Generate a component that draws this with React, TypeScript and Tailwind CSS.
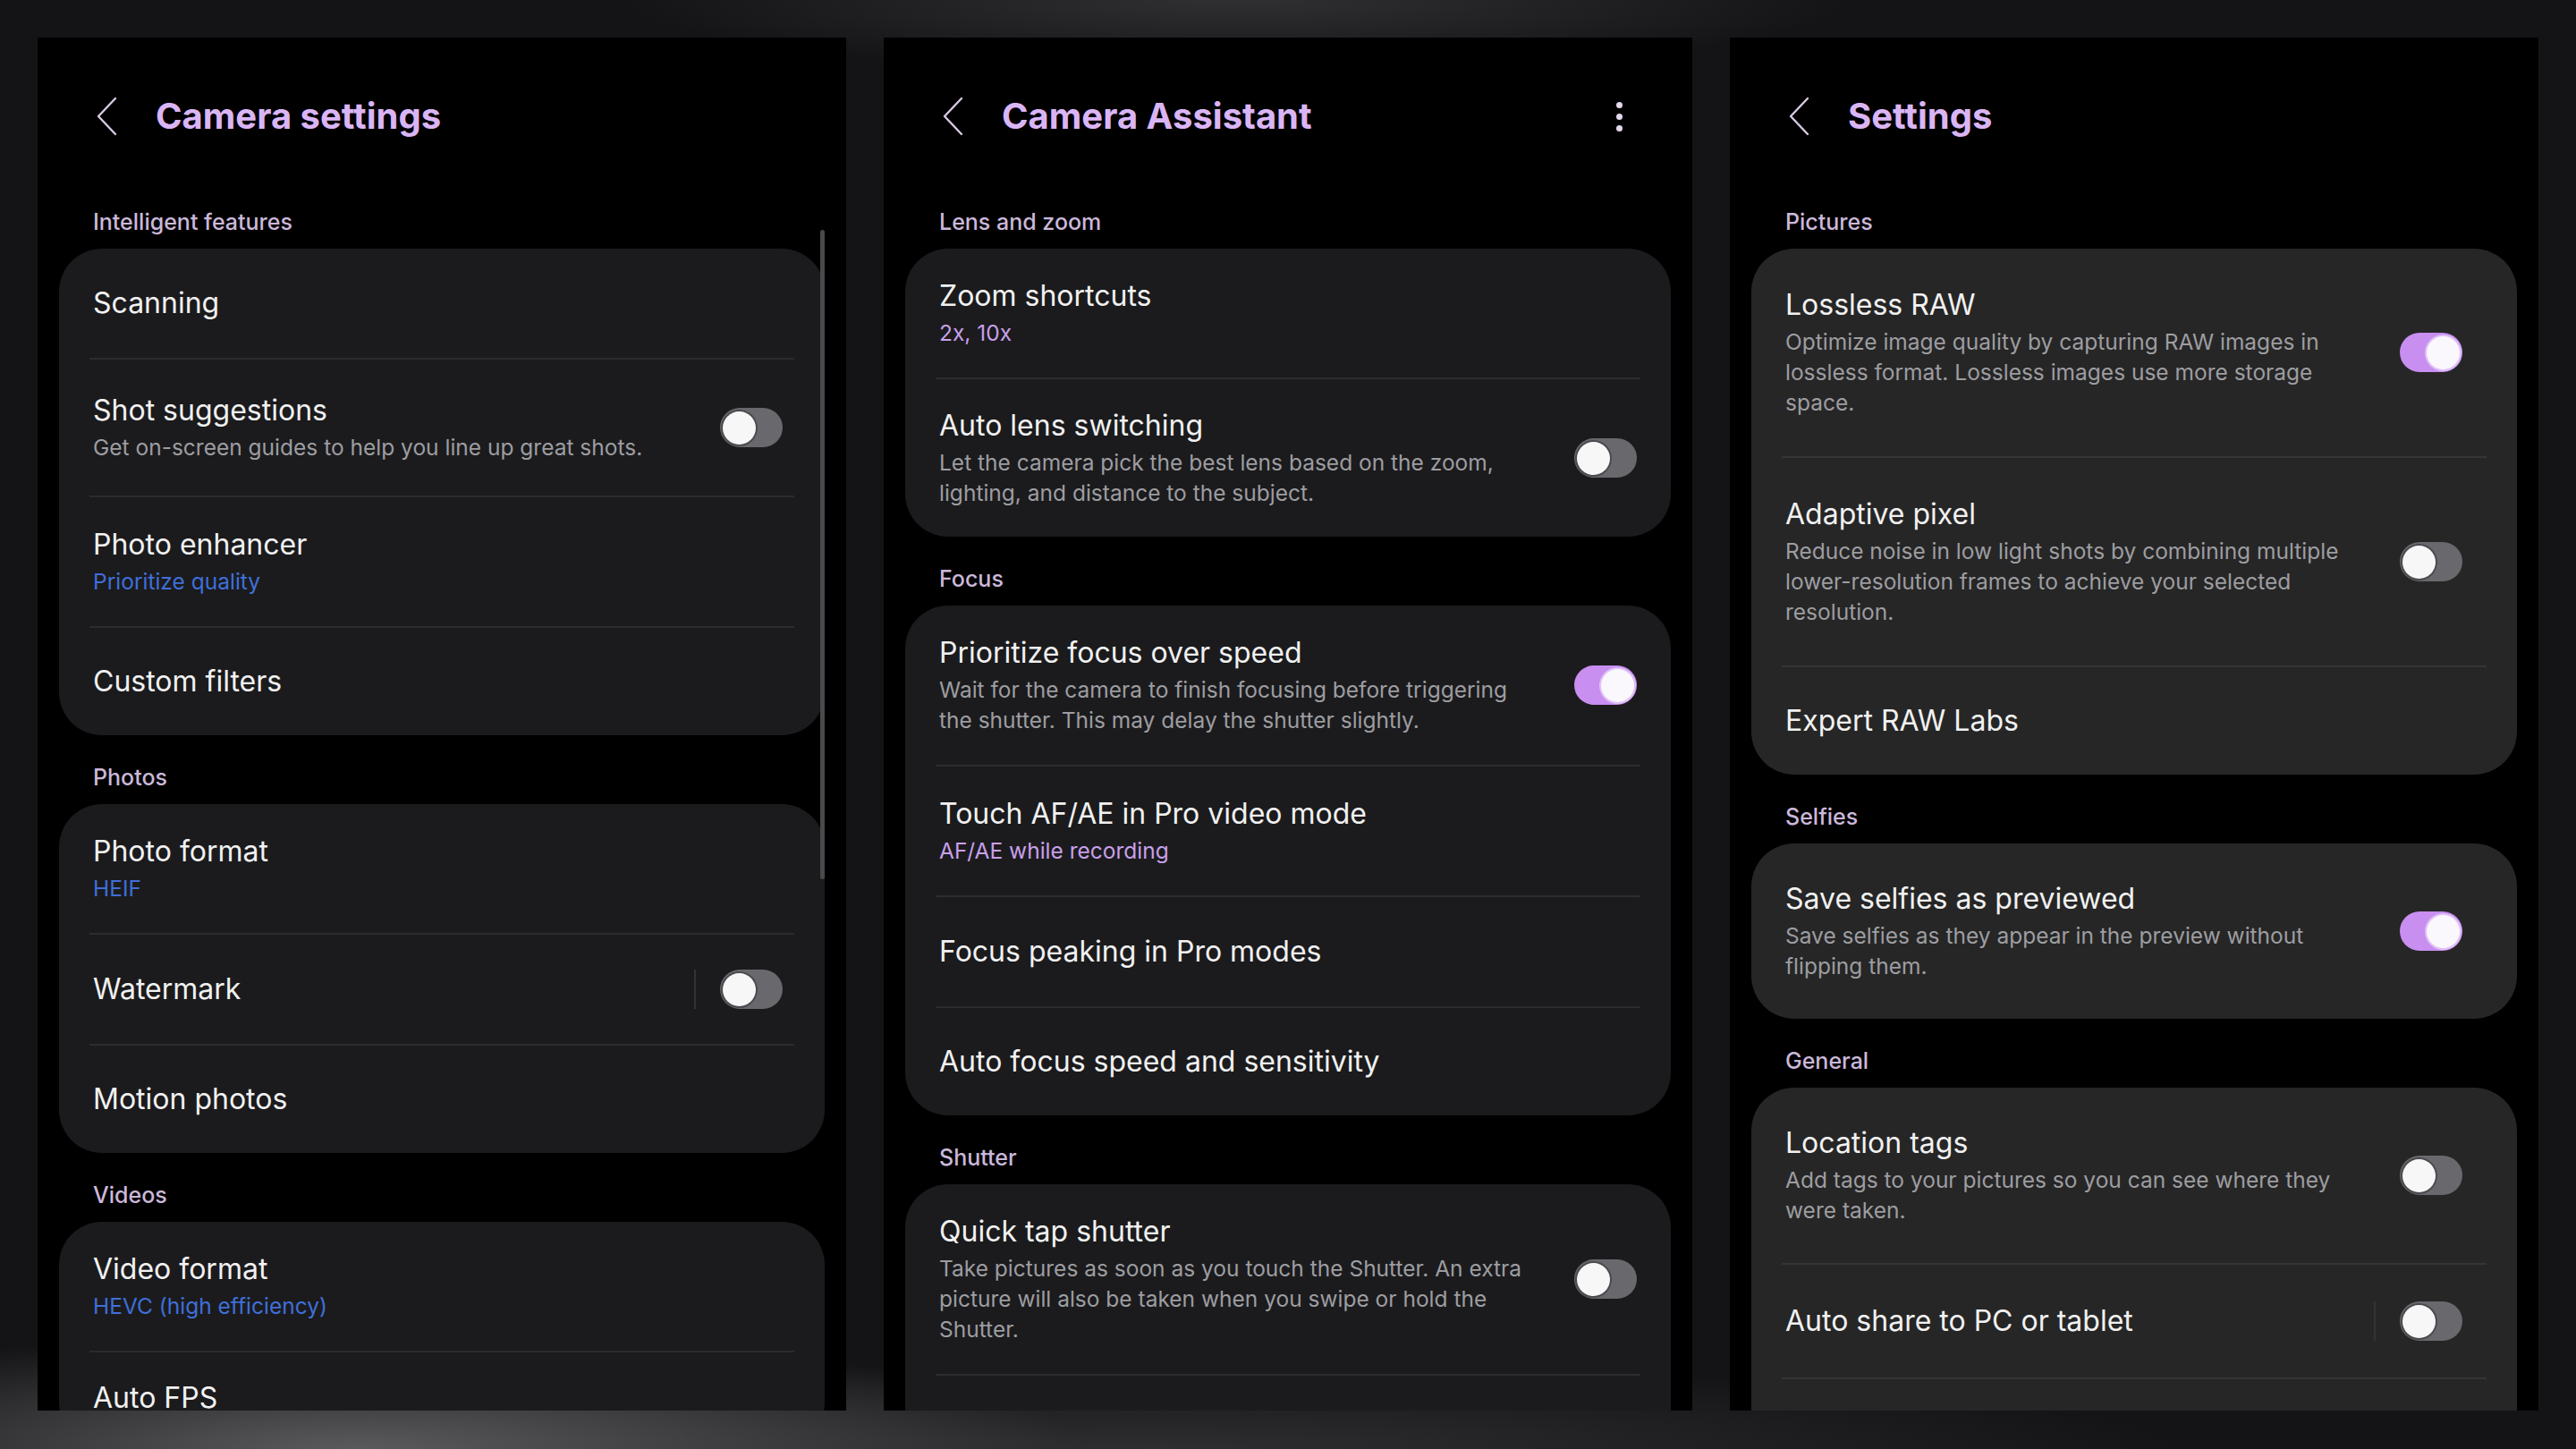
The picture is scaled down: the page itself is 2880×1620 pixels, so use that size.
import React from 'react'

type Row = {
  title: string
  sub?: string
  subTone?: 'blue' | 'lilac'
  desc?: string[]
  toggle?: 'on' | 'off'
  sep?: boolean
  pad: string
}

type Section = { label: string; rows: Row[] }

type Panel = {
  title: string
  menu?: boolean
  card: string
  line: string
  toggleRight: string
  sections: Section[]
  scrollbar?: boolean
}

const panels: Panel[] = [
  {
    title: 'Camera settings',
    card: 'bg-[#1b1b1d]',
    line: 'bg-[#2c2c2e]',
    toggleRight: 'pr-[47px]',
    scrollbar: true,
    sections: [
      {
        label: 'Intelligent features',
        rows: [
          { title: 'Scanning', pad: 'py-[41px]' },
          {
            title: 'Shot suggestions',
            desc: ['Get on-screen guides to help you line up great shots.'],
            toggle: 'off',
            pad: 'py-[37px]',
          },
          { title: 'Photo enhancer', sub: 'Prioritize quality', subTone: 'blue', pad: 'py-[33px]' },
          { title: 'Custom filters', pad: 'py-[40px]' },
        ],
      },
      {
        label: 'Photos',
        rows: [
          { title: 'Photo format', sub: 'HEIF', subTone: 'blue', pad: 'py-[33px]' },
          { title: 'Watermark', toggle: 'off', sep: true, pad: 'py-[39px]' },
          { title: 'Motion photos', pad: 'py-[40px]' },
        ],
      },
      {
        label: 'Videos',
        rows: [
          { title: 'Video format', sub: 'HEVC (high efficiency)', subTone: 'blue', pad: 'py-[33px]' },
          { title: 'Auto FPS', pad: 'pt-[31px] pb-[33px]' },
        ],
      },
    ],
  },
  {
    title: 'Camera Assistant',
    menu: true,
    card: 'bg-[#1b1b1d]',
    line: 'bg-[#2c2c2e]',
    toggleRight: 'pr-[38px]',
    sections: [
      {
        label: 'Lens and zoom',
        rows: [
          { title: 'Zoom shortcuts', sub: '2x, 10x', subTone: 'lilac', pad: 'py-[33px]' },
          {
            title: 'Auto lens switching',
            desc: ['Let the camera pick the best lens based on the zoom,', 'lighting, and distance to the subject.'],
            toggle: 'off',
            pad: 'py-[32px]',
          },
        ],
      },
      {
        label: 'Focus',
        rows: [
          {
            title: 'Prioritize focus over speed',
            desc: ['Wait for the camera to finish focusing before triggering', 'the shutter. This may delay the shutter slightly.'],
            toggle: 'on',
            pad: 'py-[33px]',
          },
          { title: 'Touch AF/AE in Pro video mode', sub: 'AF/AE while recording', subTone: 'lilac', pad: 'py-[33px]' },
          { title: 'Focus peaking in Pro modes', pad: 'py-[41px]' },
          { title: 'Auto focus speed and sensitivity', pad: 'py-[40px]' },
        ],
      },
      {
        label: 'Shutter',
        rows: [
          {
            title: 'Quick tap shutter',
            desc: [
              'Take pictures as soon as you touch the Shutter. An extra',
              'picture will also be taken when you swipe or hold the',
              'Shutter.',
            ],
            toggle: 'off',
            pad: 'py-[33px]',
          },
          { title: 'Custom Shutter sound', pad: 'py-[33px]' },
        ],
      },
    ],
  },
  {
    title: 'Settings',
    card: 'bg-[#262626]',
    line: 'bg-[#353535]',
    toggleRight: 'pr-[61px]',
    sections: [
      {
        label: 'Pictures',
        rows: [
          {
            title: 'Lossless RAW',
            desc: [
              'Optimize image quality by capturing RAW images in',
              'lossless format. Lossless images use more storage',
              'space.',
            ],
            toggle: 'on',
            pad: 'py-[43px]',
          },
          {
            title: 'Adaptive pixel',
            desc: [
              'Reduce noise in low light shots by combining multiple',
              'lower-resolution frames to achieve your selected',
              'resolution.',
            ],
            toggle: 'off',
            pad: 'py-[43px]',
          },
          { title: 'Expert RAW Labs', pad: 'py-[40px]' },
        ],
      },
      {
        label: 'Selfies',
        rows: [
          {
            title: 'Save selfies as previewed',
            desc: ['Save selfies as they appear in the preview without', 'flipping them.'],
            toggle: 'on',
            pad: 'py-[42px]',
          },
        ],
      },
      {
        label: 'General',
        rows: [
          {
            title: 'Location tags',
            desc: ['Add tags to your pictures so you can see where they', 'were taken.'],
            toggle: 'off',
            pad: 'py-[42px]',
          },
          { title: 'Auto share to PC or tablet', toggle: 'off', sep: true, pad: 'py-[41px]' },
          { title: '', pad: 'py-[41px]' },
        ],
      },
    ],
  },
]

const Toggle = ({ on }: { on: boolean }) =>
  on ? (
    <div className="w-[70px] h-[44px] rounded-full bg-[#c88ef0] flex items-center justify-end pr-[3px] shrink-0">
      <div className="w-[37px] h-[37px] rounded-full bg-[#fbf8fd] shadow-[0_0_0_2px_#e0c2f7]" />
    </div>
  ) : (
    <div className="w-[70px] h-[44px] rounded-full bg-[#69696d] flex items-center pl-[3px] shrink-0">
      <div className="w-[37px] h-[37px] rounded-full bg-[#f7f7f7] shadow-[0_0_0_2px_#4b4b4f]" />
    </div>
  )

const SettingRow = ({ row, toggleRight }: { row: Row; toggleRight: string }) => (
  <div className={`flex items-center pl-[38px] ${toggleRight} ${row.pad}`}>
    <div className="flex-1 min-w-0">
      <div className="h-[40px] text-[32px] leading-[40px] text-[#f1f1f1] whitespace-nowrap">{row.title}</div>
      {row.sub && (
        <div
          className={`mt-[4px] text-[24.5px] leading-[34px] ${
            row.subTone === 'blue' ? 'text-[#3f6fd9]' : 'text-[#c8a0ea]'
          }`}
        >
          {row.sub}
        </div>
      )}
      {row.desc && (
        <div className="mt-[4px] text-[24.5px] leading-[34px] text-[#9d9da1]">
          {row.desc.map((l) => (
            <div key={l} className="whitespace-nowrap">
              {l}
            </div>
          ))}
        </div>
      )}
    </div>
    {row.sep && <div className="w-[2px] h-[44px] bg-[#333336] mr-[27px] shrink-0" />}
    {row.toggle && <Toggle on={row.toggle === 'on'} />}
  </div>
)

const PhonePanel = ({ panel }: { panel: Panel }) => (
  <div className="relative w-[904px] h-[1535px] bg-black overflow-hidden shrink-0">
    {/* app bar */}
    <div className="h-[176px] flex items-center pl-[64px] pr-[78px]">
      <svg width="26" height="44" viewBox="0 0 26 44" className="shrink-0">
        <path
          d="M23 2 L4 22 L23 42"
          fill="none"
          stroke="#d8c9e2"
          strokeWidth="2.4"
          strokeLinecap="round"
          strokeLinejoin="round"
        />
      </svg>
      <div className="ml-[42px] flex-1 text-[40px] leading-[48px] font-bold text-[#dab5f5]">{panel.title}</div>
      {panel.menu && (
        <div className="flex flex-col gap-[6px]">
          <div className="w-[7px] h-[7px] rounded-full bg-[#e4d8ec]" />
          <div className="w-[7px] h-[7px] rounded-full bg-[#e4d8ec]" />
          <div className="w-[7px] h-[7px] rounded-full bg-[#e4d8ec]" />
        </div>
      )}
    </div>

    {panel.sections.map((section, si) => (
      <div key={section.label}>
        <div
          className={`${si === 0 ? 'pt-[15px]' : 'pt-[32px]'} pb-[15px] pl-[62px] text-[25px] leading-[30px] font-medium text-[#cbb8da]`}
        >
          {section.label}
        </div>
        <div className={`mx-[24px] rounded-[48px] ${panel.card}`}>
          {section.rows.map((row, ri) => (
            <div key={row.title || ri}>
              {ri > 0 && <div className={`mx-[34px] h-[2px] ${panel.line}`} />}
              <SettingRow row={row} toggleRight={panel.toggleRight} />
            </div>
          ))}
        </div>
      </div>
    ))}

    {panel.scrollbar && (
      <div className="absolute left-[875px] top-[215px] w-[5px] h-[726px] rounded-full bg-[#4a4a4c]" />
    )}
  </div>
)

export default function App() {
  return (
    <div className="w-[2880px] h-[1620px] overflow-hidden flex gap-[42px] px-[42px] pt-[42px] font-['Inter',sans-serif] bg-[#141416] bg-[radial-gradient(ellipse_24%_5%_at_48%_0%,#303032,transparent),radial-gradient(ellipse_28%_8%_at_14%_100%,#5a5a5c,transparent),radial-gradient(ellipse_40%_6%_at_45%_100%,#2e2e30,transparent)]">
      {panels.map((p) => (
        <PhonePanel key={p.title} panel={p} />
      ))}
    </div>
  )
}
